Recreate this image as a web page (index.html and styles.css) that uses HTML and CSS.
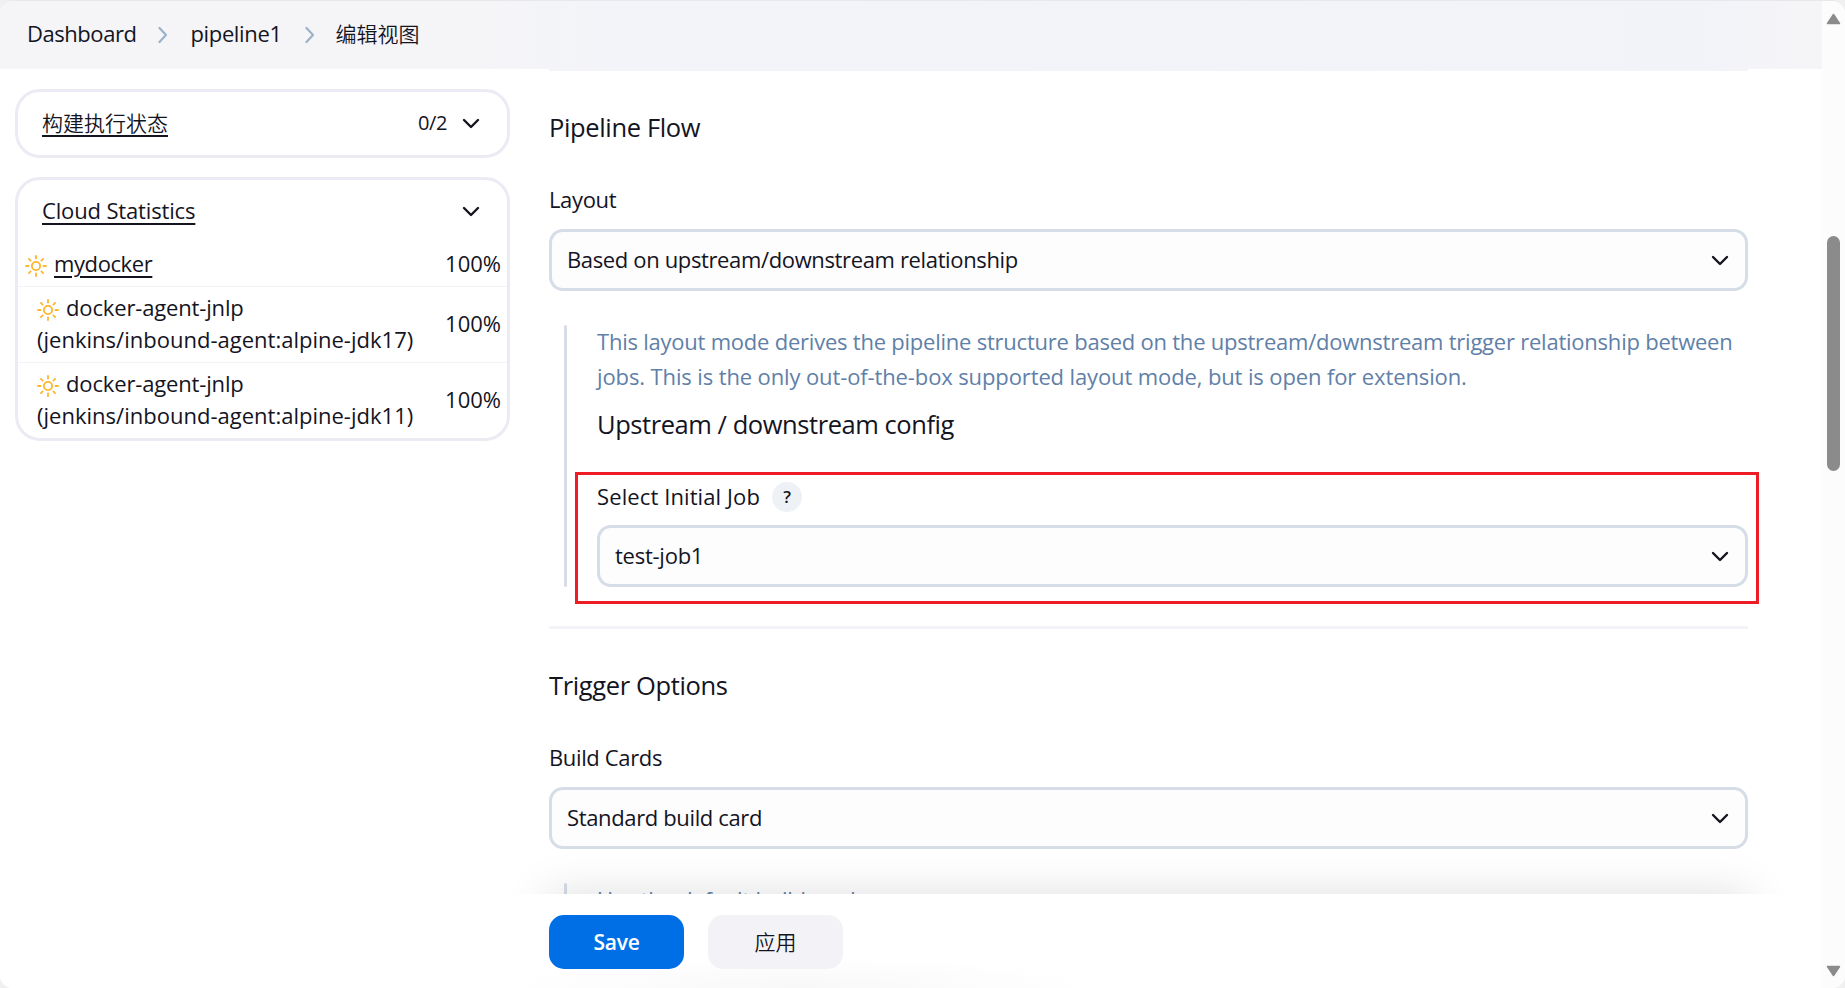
FILE: index.html
```html
<!DOCTYPE html>
<html lang="zh-CN">
<head>
<meta charset="utf-8">
<title>编辑视图 - Jenkins</title>
<link rel="stylesheet" href="styles.css">
</head>
<body>
<svg class="defs" width="0" height="0">
  <symbol id="sun" viewBox="0 0 22 22"><g fill="none" stroke="#fdb52a" stroke-width="1.8" stroke-linecap="round"><circle cx="11" cy="11" r="4.1"/><path d="M11 1v2.500M11 18.500V21M1 11h2.500M18.500 11H21M3.900 3.900l1.700 1.700M16.400 16.400l1.700 1.700M3.900 18.100l1.700-1.700M16.400 5.600l1.700-1.700"/></g></symbol>
  <symbol id="down" viewBox="0 0 18 12"><path d="M2 2l7 7 7-7" fill="none" stroke="#14141f" stroke-width="2.4" stroke-linecap="round" stroke-linejoin="round"/></symbol>
  <symbol id="next" viewBox="0 0 10 18"><path d="M1.500 2L8 9l-6.500 7" fill="none" stroke="#9bb2ca" stroke-width="2.2" stroke-linecap="round" stroke-linejoin="round"/></symbol>
</svg>
<div class="window">
  <div class="page">
    <header class="crumbs">
      <span class="crumb tight">Dashboard</span>
      <svg class="sep sep-1"><use href="#next"/></svg>
      <span class="crumb">pipeline1</span>
      <svg class="sep sep-2"><use href="#next"/></svg>
      <span class="crumb cjk">编辑视图</span>
    </header>
    <div class="body">
      <aside class="side">
        <section class="card">
          <div class="card-head"><a class="cjk">构建执行状态</a><span class="count">0/2</span><svg class="chev"><use href="#down"/></svg></div>
        </section>
        <section class="card">
          <div class="card-head"><a>Cloud Statistics</a><svg class="chev"><use href="#down"/></svg></div>
          <div class="stat stat-cloud"><div><svg class="sun"><use href="#sun"/></svg><a>mydocker</a></div><span class="pct">100%</span></div>
          <div class="stat stat-agent"><div><svg class="sun"><use href="#sun"/></svg><span>docker-agent-jnlp</span><br><span class="image">(jenkins/inbound-agent:alpine-jdk17)</span></div><span class="pct">100%</span></div>
          <div class="stat stat-agent"><div><svg class="sun"><use href="#sun"/></svg><span>docker-agent-jnlp</span><br><span class="image">(jenkins/inbound-agent:alpine-jdk11)</span></div><span class="pct">100%</span></div>
        </section>
      </aside>
      <main class="main">
        <h2 class="title">Pipeline Flow</h2>
        <div class="label">Layout</div>
        <div class="select"><span>Based on upstream/downstream relationship</span><svg class="chev"><use href="#down"/></svg></div>
        <div class="nested">
          <p class="desc">This layout mode derives the pipeline structure based on the upstream/downstream trigger relationship between<br><span class="loose">jobs. This is the only out-of-the-box supported layout mode, but is open for extension.</span></p>
          <h2 class="subtitle">Upstream / downstream config</h2>
          <div class="job">
            <div class="label"><span class="job-name">Select Initial Job</span><span class="help">?</span></div>
            <div class="select"><span>test-job1</span><svg class="chev"><use href="#down"/></svg></div>
            <div class="highlight"></div>
          </div>
        </div>
        <div class="divider"></div>
        <h2 class="title">Trigger Options</h2>
        <div class="label">Build Cards</div>
        <div class="select"><span>Standard build card</span><svg class="chev"><use href="#down"/></svg></div>
        <div class="nested"><p class="desc">Use the default build card</p></div>
      </main>
    </div>
    <footer class="bottom">
      <div class="glow"></div>
      <div class="actions"><button class="btn primary">Save</button><button class="btn cjk">应用</button></div>
    </footer>
  </div>
  <div class="scrollbar">
    <svg width="15" height="12" viewBox="0 0 15 12"><path d="M7.500 1.500L13.500 10.500H1.500Z" fill="#8b8b8b" stroke="#8b8b8b" stroke-width="1.500" stroke-linejoin="round"/></svg>
    <div class="thumb"></div>
    <svg class="arrow-down" width="15" height="12" viewBox="0 0 15 12"><path d="M7.500 10.500L13.500 1.500H1.500Z" fill="#8b8b8b" stroke="#8b8b8b" stroke-width="1.500" stroke-linejoin="round"/></svg>
  </div>
</div>
</body>
</html>
```
FILE: styles.css
```css
* { box-sizing: border-box; }
body { margin: 0; background: #f0f0f0; color: #14141f; font: 22px/32px "Open Sans", "Noto Sans CJK SC", sans-serif; letter-spacing: -.36px; }
.defs { display: block; position: absolute; }
svg { flex: none; }
.window { display: flex; width: 1845px; height: 988px; border-top: 1px solid #e8e8ea; border-radius: 13px; background: #fff; overflow: hidden; }
.page { position: relative; width: 1822px; height: 987px; overflow: hidden; }
.cjk { font-family: "Noto Sans CJK SC", sans-serif; font-weight: 350; font-size: 21px; letter-spacing: 0; }

.crumbs { display: flex; align-items: center; height: 68px; padding-left: 27px; background: linear-gradient(90deg, #f5f5f8 0, #f5f5f8 480px, #f3f4f9 620px, #f2f3f9 1700px, #f5f5f8 1800px); }
.crumb { padding-bottom: 4px; }
.tight { letter-spacing: -.45px; }
.sep { width: 10px; height: 18px; }
.sep-1 { margin: 0 22px 0 22px; }
.sep-2 { margin: 0 21px 0 23px; }

.body { display: flex; height: 919px; }
.side { flex: none; width: 549px; padding: 20px 0 0 15px; letter-spacing: -.15px; }
.card { width: 495px; border: 3px solid #ebebf3; border-radius: 25px; margin-bottom: 19px; }
.card-head { display: flex; align-items: center; height: 63px; padding: 0 27px 0 24px; }
.card-head a { padding-bottom: 3px; }
.card-head .count { padding-bottom: 1px; }
.card-head a, .stat a { text-decoration: underline; text-decoration-thickness: 2px; text-underline-offset: 4px; }
.stat a { letter-spacing: -.4px; }
.card-head .count { margin-left: auto; font-size: 20px; letter-spacing: -.4px; }
.card-head .chev { margin-left: 15px; }
.card-head a + .chev { margin-left: auto; }
.chev { width: 18px; height: 12px; }
.stat { display: flex; align-items: center; justify-content: space-between; padding: 0 6px 3px 0; }
.stat .sun { width: 22px; height: 22px; margin-right: 7px; vertical-align: -5px; }
.stat-cloud { height: 43px; padding-left: 7px; }
.stat-agent { height: 76px; padding-left: 19px; border-top: 1px solid #f3f3f7; }
.pct { letter-spacing: 0; }
.image { letter-spacing: .01px; }

.main { width: 1199px; border-top: 2px solid #f3f3f8; }
.title { margin: 38px 0 0; height: 36px; font-size: 25.5px; line-height: 36px; font-weight: 400; }
.label { display: flex; align-items: center; height: 32px; margin-top: 38px; }
.select { display: flex; align-items: center; justify-content: space-between; height: 62px; margin-top: 14px; padding: 0 16px 0 15px; border: 3px solid #d6dde6; border-radius: 14px; background: #fdfdfd; }
.select span { padding-bottom: 2px; }
.select .chev { margin-top: 1px; }
.nested { position: relative; margin: 34px 0 0 15px; padding: 1px 0 0 33px; }
.nested::before { content: ""; position: absolute; left: 0; top: 0; bottom: 0; width: 3px; border-radius: 2px; background: #d6dde8; }
.desc { margin: -2px 0 0; line-height: 35px; color: #5f80a8; white-space: nowrap; letter-spacing: -.228px; }
.loose { letter-spacing: -.12px; }
.subtitle { margin: 12px 0 0; font-size: 25.5px; line-height: 36px; font-weight: 400; letter-spacing: -.44px; }
.job { position: relative; margin-top: 38px; }
.job .label { margin-top: 0; }
.job .select { margin-top: 13px; }
.job .select span { letter-spacing: -.25px; }
.job-name { letter-spacing: .105px; }
.help { width: 30px; height: 30px; margin: 1px 0 0 12px; border-radius: 50%; background: #eef1f5; font-size: 17px; font-weight: 600; line-height: 30px; text-align: center; }
.highlight { position: absolute; left: -22px; right: -11px; top: -8px; bottom: -17px; border: 3px solid #ee1c25; }
.divider { height: 3px; margin-top: 39px; background: #f3f3f8; }

.bottom { position: absolute; left: 0; right: 0; bottom: 0; height: 94px; background: radial-gradient(ellipse 300px 32px at 800px 100%, #f8f8f9, #fff) no-repeat #fff; }
.glow { position: absolute; left: 510px; right: 20px; top: -50px; height: 50px; overflow: hidden; }
.glow::after { content: ""; position: absolute; left: 36px; right: 52px; top: 50px; height: 94px; box-shadow: 0 0 46px rgba(0, 0, 0, .13); }
.actions { display: flex; gap: 24px; padding: 21px 0 0 549px; }
.btn { width: 135px; height: 54px; padding: 0; border: 0; border-radius: 15px; background: #f3f3f7; color: #14141f; }
.btn.cjk { padding-bottom: 2px; }
.primary { background: #006fe6; color: #fff; font: 600 21px "Open Sans", sans-serif; letter-spacing: -.26px; }

.scrollbar { display: flex; flex-direction: column; align-items: center; width: 23px; height: 987px; padding: 12px 0 11px; background: #fcfcfc; }
.thumb { width: 13px; height: 235px; margin-top: 211px; border-radius: 7px; background: #8b8b8b; }
.arrow-down { margin-top: auto; }
```
